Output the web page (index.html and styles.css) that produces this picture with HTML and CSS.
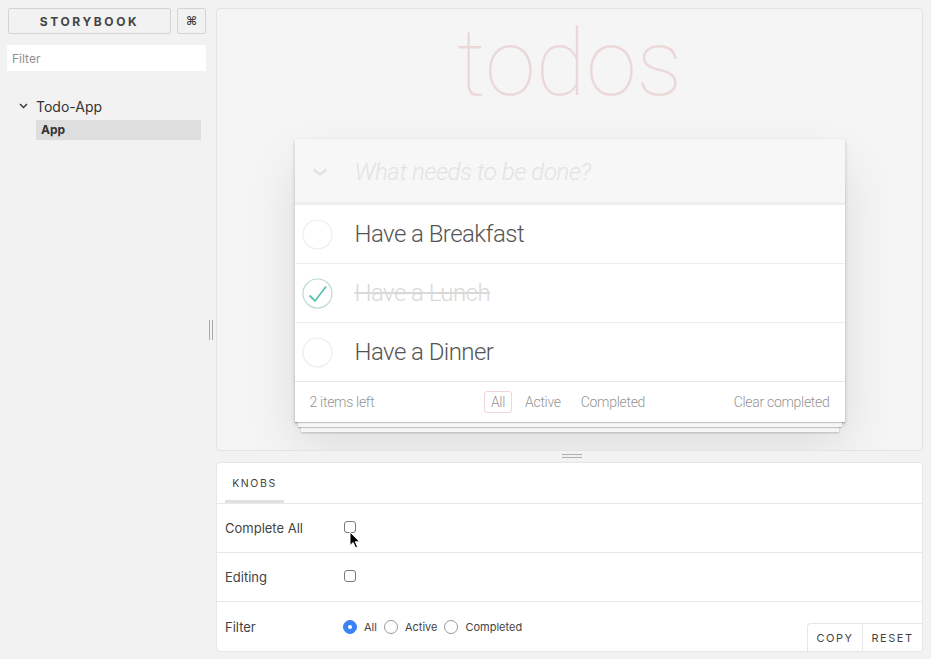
FILE: index.html
```html
<!DOCTYPE html>
<html lang="en">
<head>
<meta charset="utf-8">
<title>Storybook</title>
<link rel="stylesheet" href="styles.css">
</head>
<body>
<div class="app">
  <aside class="sidebar">
    <div class="brand-row">
      <button class="brand">STORYBOOK</button>
      <button class="shortcut">⌘</button>
    </div>
    <input class="filter" type="text" placeholder="Filter">
    <ul class="tree">
      <li class="kind">
        <svg class="chev" width="9" height="6" viewBox="0 0 9 6"><path d="M1 1 L4.5 4.5 L8 1" fill="none" stroke="#333" stroke-width="1.4"/></svg>
        <span>Todo-App</span>
      </li>
      <li class="story selected">App</li>
    </ul>
  </aside>

  <div class="vgutter"><span class="grip-v"></span></div>

  <main class="main">
    <section class="preview">
      <h1 class="title">todos</h1>
      <div class="todoapp">
        <header class="todo-header">
          <svg class="toggle-all" width="16" height="8" viewBox="0 0 16 8"><path d="M1.5 1.2 L8 6.5 L14.5 1.2" fill="none" stroke="#e3e3e3" stroke-width="2.6"/></svg>
          <input class="new-todo" type="text" placeholder="What needs to be done?">
        </header>
        <ul class="todo-list">
          <li class="todo">
            <svg class="toggle" width="31" height="31" viewBox="0 0 31 31"><circle cx="15.5" cy="15.5" r="14.5" fill="none" stroke="#ededed" stroke-width="1.2"/></svg>
            <span class="todo-label">Have a Breakfast</span>
          </li>
          <li class="todo done">
            <svg class="toggle" width="31" height="31" viewBox="0 0 31 31"><circle cx="15.5" cy="15.5" r="14.5" fill="none" stroke="#bddad5" stroke-width="1.2"/><path d="M7.5 17.5 L13 23 L24 8.5" fill="none" stroke="#5dc2af" stroke-width="1.8"/></svg>
            <span class="todo-label">Have a Lunch</span>
          </li>
          <li class="todo">
            <svg class="toggle" width="31" height="31" viewBox="0 0 31 31"><circle cx="15.5" cy="15.5" r="14.5" fill="none" stroke="#ededed" stroke-width="1.2"/></svg>
            <span class="todo-label">Have a Dinner</span>
          </li>
        </ul>
        <footer class="todo-footer">
          <span class="count">2 items left</span>
          <ul class="filters">
            <li class="filter-link selected">All</li>
            <li class="filter-link">Active</li>
            <li class="filter-link">Completed</li>
          </ul>
          <span class="clear">Clear completed</span>
        </footer>
      </div>
    </section>

    <div class="hgutter"><span class="grip-h"></span></div>

    <section class="knobs">
      <div class="tabs">
        <span class="tab">KNOBS</span>
      </div>
      <div class="knob-row">
        <span class="knob-label">Complete All</span>
        <span class="checkbox"></span>
      </div>
      <div class="knob-row">
        <span class="knob-label">Editing</span>
        <span class="checkbox"></span>
      </div>
      <div class="knob-row last">
        <span class="knob-label">Filter</span>
        <div class="radios">
          <span class="radio checked"></span><span class="radio-text">All</span>
          <span class="radio"></span><span class="radio-text">Active</span>
          <span class="radio"></span><span class="radio-text">Completed</span>
        </div>
      </div>
      <div class="knob-actions">
        <button class="action copy">COPY</button>
        <button class="action reset">RESET</button>
      </div>
      <svg class="cursor" width="12" height="18" viewBox="0 0 12 18"><path d="M1 1 L1 14.5 L4.2 11.6 L6.5 16.8 L8.6 15.9 L6.4 10.8 L10.6 10.8 Z" fill="#000" stroke="#fff" stroke-width="1"/></svg>
    </section>
  </main>
</div>
</body>
</html>
```

FILE: styles.css
```css
* { box-sizing: border-box; }
html, body { margin: 0; padding: 0; }
body {
  background: #f2f2f2;
  font-family: "Inter", "Noto Sans", "Liberation Sans", sans-serif;
  color: #333;
}
ul { list-style: none; margin: 0; padding: 0; }
button { font-family: inherit; }

.app {
  display: flex;
  width: 931px;
  height: 659px;
}

/* Sidebar */
.sidebar {
  width: 206px;
  flex: none;
  padding: 8px 0 0 8px;
}
.brand-row {
  display: flex;
  gap: 6px;
}
.brand {
  flex: 1;
  height: 26px;
  background: transparent;
  border: 1px solid #d4d4d4;
  border-radius: 2px;
  font-size: 12px;
  font-weight: 700;
  letter-spacing: 2.6px;
  color: #444;
  padding: 0;
}
.shortcut {
  width: 29px;
  height: 26px;
  background: transparent;
  border: 1px solid #d4d4d4;
  border-radius: 2px;
  font-family: "DejaVu Sans", sans-serif;
  font-size: 12px;
  font-weight: 700;
  color: #444;
  padding: 0;
}
.filter {
  display: block;
  width: 199px;
  height: 26px;
  margin: 11px 0 0 -1px;
  border: none;
  background: #fff;
  padding: 0 5px;
  font-family: "Inter", "Noto Sans", sans-serif;
  font-size: 12px;
  outline: none;
}
.filter::placeholder { color: #8f8f8f; }
.tree { margin-top: 25px; }
.kind {
  display: flex;
  align-items: center;
  height: 20px;
  padding-left: 11px;
  font-size: 14px;
  color: #333;
}
.chev { margin-right: 8px; }
.story {
  margin: 4px 5px 0 28px;
  height: 20px;
  line-height: 20px;
  padding-left: 5px;
  font-size: 12px;
  font-weight: 700;
  color: #333;
}
.story.selected { background: #dedede; }

/* Vertical gutter */
.vgutter {
  width: 10px;
  flex: none;
  display: flex;
  align-items: center;
  justify-content: center;
}
.grip-v {
  width: 4px;
  height: 20px;
  border-left: 1px solid #a8a8a8;
  border-right: 1px solid #a8a8a8;
}

/* Main */
.main {
  width: 707px;
  flex: none;
  padding-top: 8px;
  display: flex;
  flex-direction: column;
}
.preview {
  height: 443px;
  background: #f5f5f5;
  border: 1px solid #e3e3e3;
  border-radius: 4px;
  overflow: hidden;
  font-family: "Roboto", "Liberation Sans", sans-serif;
}
.title {
  margin: 0;
  padding-top: 0;
  height: 130px;
  line-height: 110px;
  text-align: center;
  font-size: 92px;
  font-weight: 100;
  color: rgba(175, 47, 47, 0.14);
}
.todoapp {
  width: 550px;
  margin: 0 auto;
  background: #fff;
  position: relative;
  z-index: 0;
  box-shadow: 0 2px 4px 0 rgba(0,0,0,0.2), 0 25px 50px 0 rgba(0,0,0,0.1);
}
.todo-header {
  height: 65px;
  display: flex;
  align-items: center;
  background: #f7f7f7;
  box-shadow: inset 0 -2px 1px rgba(0,0,0,0.03);
}
.toggle-all { margin-left: 17px; flex: none; }
.new-todo {
  flex: 1;
  margin-left: 27px;
  border: none;
  background: transparent;
  font-family: "Roboto", "Liberation Sans", sans-serif;
  font-size: 24px;
  font-weight: 300;
  font-style: italic;
  letter-spacing: -0.4px;
  outline: none;
  padding: 0;
}
.new-todo::placeholder { color: #e3e3e3; font-style: italic; }

.todo {
  display: flex;
  align-items: center;
  border-top: 1px solid #ededed;
  height: 59px;
}
.toggle { margin-left: 7px; flex: none; }
.todo-label {
  padding-left: 22px;
  font-size: 24px;
  font-weight: 300;
  letter-spacing: -0.55px;
  line-height: 28px;
  color: #555;
}
.todo.done .todo-label {
  color: #d9d9d9;
  text-decoration: line-through;
}

.todo-footer {
  position: relative;
  display: grid;
  grid-template-columns: 1fr auto 1fr;
  align-items: center;
  height: 41px;
  padding: 0 15px;
  border-top: 1px solid #e6e6e6;
  color: #959595;
  font-size: 14px;
  font-weight: 300;
  letter-spacing: -0.3px;
}
.todo-footer::before {
  content: "";
  position: absolute;
  left: 0;
  right: 0;
  bottom: 0;
  height: 50px;
  overflow: hidden;
  z-index: -1;
  box-shadow: 0 1px 1px rgba(0,0,0,0.2),
              0 8px 0 -3px #f6f6f6,
              0 9px 1px -3px rgba(0,0,0,0.2),
              0 16px 0 -6px #f6f6f6,
              0 17px 2px -6px rgba(0,0,0,0.2);
}
.count, .filters, .clear { position: relative; }
.filters {
  display: flex;
  gap: 6px;
  margin-right: 3px;
}
.filter-link {
  padding: 2px 6px;
  border: 1px solid transparent;
  border-radius: 3px;
  line-height: 16px;
}
.filter-link.selected { border-color: rgba(175,47,47,0.2); }
.clear { justify-self: end; }

/* Horizontal gutter */
.hgutter {
  height: 11px;
  display: flex;
  justify-content: center;
  align-items: flex-start;
}
.grip-h {
  width: 20px;
  height: 4px;
  margin-top: 3px;
  margin-left: 4px;
  border-top: 1px solid #b0b0b0;
  border-bottom: 1px solid #b0b0b0;
}

/* Knobs */
.knobs {
  position: relative;
  height: 190px;
  background: #fff;
  border: 1px solid #e6e6e6;
  border-radius: 4px;
  font-family: "Inter", "Noto Sans", "Liberation Sans", sans-serif;
}
.tabs {
  height: 41px;
  border-bottom: 1px solid #e8e8e8;
  padding-left: 8px;
  display: flex;
}
.tab {
  width: 59px;
  text-align: center;
  padding-top: 14px;
  font-size: 10.5px;
  letter-spacing: 1.6px;
  color: #444;
  border-bottom: 3px solid #e0e0e0;
}
.knob-row {
  height: 49px;
  display: flex;
  align-items: center;
  border-bottom: 1px solid #e8e8e8;
  padding-left: 8px;
}
.knob-row.last { border-bottom: none; }
.knob-label {
  width: 119px;
  font-size: 13px;
  color: #444;
}
.checkbox {
  width: 12px;
  height: 12px;
  border: 1px solid #7a7a7a;
  border-radius: 3px;
  margin-top: -2px;
}
.radios {
  display: flex;
  align-items: center;
  font-size: 11px;
  color: #444;
}
.radio {
  width: 14px;
  height: 14px;
  border: 1px solid #9a9a9a;
  border-radius: 50%;
  margin-left: -1px;
}
.radio.checked {
  background: #3a82f6;
  border-color: #3a82f6;
  position: relative;
}
.radio.checked::after {
  content: "";
  position: absolute;
  left: 4px;
  top: 4px;
  width: 4px;
  height: 4px;
  border-radius: 50%;
  background: #fff;
}
.radio-text { margin: 0 8px 0 7px; }

.knob-actions {
  position: absolute;
  right: 0;
  bottom: 0;
  display: flex;
}
.action {
  height: 28px;
  background: #fff;
  border: 1px solid #e6e6e6;
  border-right: none;
  border-bottom: none;
  font-size: 11px;
  letter-spacing: 1.5px;
  color: #444;
  padding: 0;
}
.action.copy { width: 55px; border-top-left-radius: 4px; }
.action.reset { width: 60px; border-bottom-right-radius: 4px; }

.cursor {
  position: absolute;
  left: 132px;
  top: 68px;
}
```
